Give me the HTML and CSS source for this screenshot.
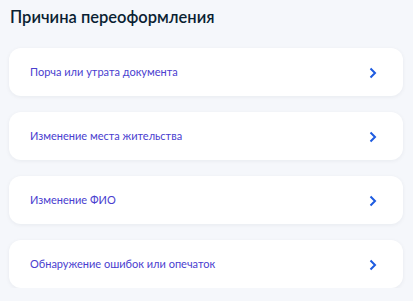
FILE: index.html
```html
<!DOCTYPE html>
<html lang="ru">
<head>
    <meta charset="UTF-8">
    <title>Причина переоформления</title>
    <link rel="stylesheet" href="styles.css">
</head>
<body>
    <h1 class="title">Причина переоформления</h1>
    <div class="list">
        <a class="item" href="#">
            <span>Порча или утрата документа</span>
            <svg class="arrow" viewBox="0 0 8 12" width="8" height="12"><path d="M1.5 1.5 L6 6 L1.5 10.5" fill="none" stroke="#1d5be0" stroke-width="2"/></svg>
        </a>
        <a class="item" href="#">
            <span>Изменение места жительства</span>
            <svg class="arrow" viewBox="0 0 8 12" width="8" height="12"><path d="M1.5 1.5 L6 6 L1.5 10.5" fill="none" stroke="#1d5be0" stroke-width="2"/></svg>
        </a>
        <a class="item" href="#">
            <span>Изменение ФИО</span>
            <svg class="arrow" viewBox="0 0 8 12" width="8" height="12"><path d="M1.5 1.5 L6 6 L1.5 10.5" fill="none" stroke="#1d5be0" stroke-width="2"/></svg>
        </a>
        <a class="item" href="#">
            <span>Обнаружение ошибок или опечаток</span>
            <svg class="arrow" viewBox="0 0 8 12" width="8" height="12"><path d="M1.5 1.5 L6 6 L1.5 10.5" fill="none" stroke="#1d5be0" stroke-width="2"/></svg>
        </a>
    </div>
</body>
</html>
```

FILE: styles.css
```css
body {
    margin: 0;
    padding: 0 10px 0 9px;
    background-color: #f5f7fb;
    font-family: Lato, "Noto Sans", sans-serif;
}

.title {
    margin: 0;
    padding: 6px 0 0 1px;
    height: 48px;
    box-sizing: border-box;
    font-size: 16.5px;
    font-weight: 600;
    line-height: 22px;
    color: #0b1f33;
}

.list {
    display: flex;
    flex-direction: column;
    gap: 16px;
}

.item {
    display: flex;
    align-items: center;
    justify-content: space-between;
    height: 48px;
    padding: 0 26px 0 21px;
    background-color: #fff;
    border-radius: 12px;
    box-shadow: 0 1px 4px rgba(11, 31, 51, 0.06);
    text-decoration: none;
    color: #4a40cf;
    font-size: 11px;
}

.item span {
    margin-top: -1px;
}

.arrow {
    display: block;
    margin-top: 1px;
}
```
